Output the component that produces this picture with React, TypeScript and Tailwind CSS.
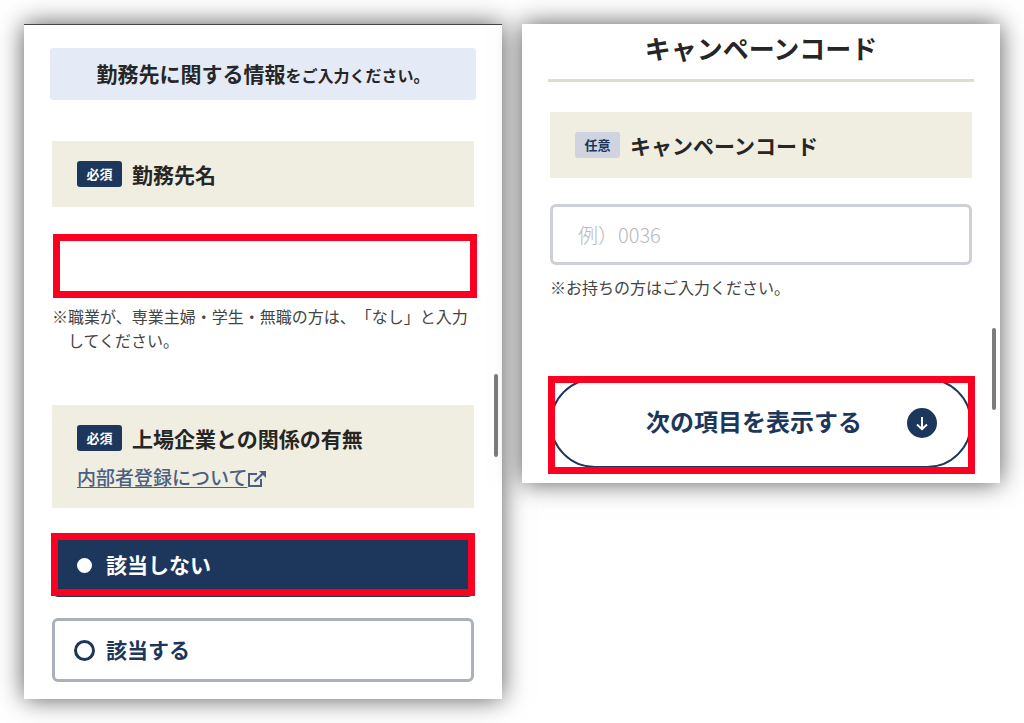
import { useState } from 'react';
import type { ReactNode } from 'react';
import clsx from 'clsx';

const relationOptions = [
  { id: 'none', label: '該当しない', highlighted: true },
  { id: 'exists', label: '該当する', highlighted: false },
];

function Panel({ children, className }: { children: ReactNode; className?: string }) {
  return (
    <section className={clsx('relative bg-white px-7 shadow-[0_0_24px_rgba(0,0,0,0.65)]', className)}>
      {children}
    </section>
  );
}

function ScrollThumb({ className }: { className: string }) {
  return <div className={clsx('absolute right-1 w-1 rounded-full bg-[#7c7c7c]', className)} />;
}

// Red frame drawn over the control the reader should look at
function Highlight({ className }: { className: string }) {
  return <span className={clsx('pointer-events-none absolute border-[7px] border-[#fb0020]', className)} />;
}

function Badge({ required = false }: { required?: boolean }) {
  return (
    <span
      className={clsx(
        'flex h-[26px] w-[45px] shrink-0 items-center justify-center rounded-[3px] text-[13px] font-bold',
        required ? 'bg-[#1d365b] text-white' : 'bg-[#d0d4e0] text-[#1d365b]'
      )}
    >
      {required ? '必須' : '任意'}
    </span>
  );
}

function ExternalIcon() {
  return (
    <svg viewBox="0 0 20 18" className="mt-1 h-[18px] w-5" fill="none" stroke="currentColor" strokeWidth="2" aria-hidden="true">
      <path d="M10 4H2v12h12V9" />
      <path d="M7.5 11.5 16 3.5" strokeWidth="2.4" />
      <path d="M12 1h7v7z" fill="currentColor" stroke="none" />
    </svg>
  );
}

export default function App() {
  const [relation, setRelation] = useState('none');
  const [company, setCompany] = useState('');
  const [code, setCode] = useState('');

  return (
    <main className="grid min-h-screen grid-cols-2 items-start gap-5 bg-white p-6 font-['Noto_Sans_CJK_JP',sans-serif] text-[#262626] [text-spacing-trim:space-all]">
      <Panel className="border-t border-[#444] pt-[23px] pb-[17px]">
        <p className="-mx-0.5 flex h-[52px] items-center justify-center rounded-[3px] bg-[#e4ebf6]">
          <span className="font-bold leading-[26px]">
            <span className="text-[21px]">勤務先に関する情報</span>
            <span className="text-[16px]">をご入力ください。</span>
          </span>
        </p>

        <div className="mt-[41px] flex items-center gap-2.5 bg-[#f0ede1] px-[25px] py-5">
          <Badge required />
          <label htmlFor="company" className="text-[21px] font-bold leading-[26px]">勤務先名</label>
        </div>
        <div className="relative mt-[27px]">
          <input
            id="company"
            value={company}
            onChange={(e) => setCompany(e.target.value)}
            className="block h-16 w-full px-6 text-[20px] outline-none"
          />
          <Highlight className="inset-y-0 left-px -right-[3px]" />
        </div>
        <p className="mt-1.5 pl-4 -indent-4 text-[16px] leading-6 text-[#444]">
          ※職業が、専業主婦・学生・無職の方は、「なし」と入力してください。
        </p>

        <fieldset className="mt-[53px]">
          <legend className="block w-full bg-[#f0ede1] px-[25px] pt-5 pb-[18px]">
            <span className="flex items-center gap-2.5">
              <Badge required />
              <span className="text-[21px] font-bold leading-[26px]">上場企業との関係の有無</span>
            </span>
            <a href="#insider" className="mt-[13px] flex items-center text-[19px] font-medium leading-[26px] text-[#4b5f80]">
              <span className="underline underline-offset-2">内部者登録について</span>
              <ExternalIcon />
            </a>
          </legend>
          <div className="mt-[25px] flex flex-col gap-[21px]">
            {relationOptions.map((option) => (
              <label
                key={option.id}
                className={clsx(
                  'relative flex h-16 items-center gap-[11px] rounded-md border-[3px] px-[19px] text-[21px] font-bold',
                  relation === option.id
                    ? 'border-[#1d365b] bg-[#1d365b] text-white'
                    : 'border-[#abb1ba] bg-white text-[#1d365b]'
                )}
              >
                <input
                  type="radio"
                  name="relation"
                  checked={relation === option.id}
                  onChange={() => setRelation(option.id)}
                  className="size-[21px] appearance-none rounded-full border-[3px] border-[#1d365b] bg-white"
                />
                {option.label}
                {option.highlighted && <Highlight className="-inset-x-1 -top-[3px] -bottom-0.5" />}
              </label>
            ))}
          </div>
        </fieldset>
        <ScrollThumb className="top-[349px] h-[83px]" />
      </Panel>

      <Panel className="pb-[15px]">
        <h2 className="-mx-0.5 border-b-[3px] border-[#e0ddcf] pt-1.5 pb-[13px] text-center text-[26px] font-bold leading-9">
          キャンペーンコード
        </h2>

        <div className="mt-[30px] flex items-center gap-2.5 bg-[#f0ede1] px-[25px] py-5">
          <Badge />
          <label htmlFor="code" className="text-[21px] font-bold leading-[26px]">キャンペーンコード</label>
        </div>
        <input
          id="code"
          value={code}
          onChange={(e) => setCode(e.target.value)}
          placeholder="例）0036"
          className="mt-[26px] block h-[61px] w-full rounded-md border-[3px] border-[#ced0d8] px-[25px] text-[20px] font-light outline-none placeholder:text-[#b9b9b9]"
        />
        <p className="mt-2.5 text-[16px] leading-6 text-[#444]">※お持ちの方はご入力ください。</p>

        <div className="relative mt-[79px]">
          <button
            type="button"
            className="relative flex h-[90px] w-full items-center justify-center rounded-full border-2 border-[#1d365b] bg-white px-[33px] text-[24px] font-bold text-[#1d365b]"
          >
            <span className="flex-1 pb-1 pl-4 text-center">次の項目を表示する</span>
            <svg viewBox="0 0 30 30" className="size-[30px] shrink-0" aria-hidden="true">
              <circle cx="15" cy="15" r="15" fill="#1d365b" />
              <path d="M15 9v12M10 16.5l5 4.7 5-4.7" fill="none" stroke="#fff" strokeWidth="2" />
            </svg>
          </button>
          <Highlight className="-top-0.5 -right-[3px] -bottom-1.5 -left-0.5" />
        </div>
        <ScrollThumb className="top-[304px] h-[82px]" />
      </Panel>
    </main>
  );
}
